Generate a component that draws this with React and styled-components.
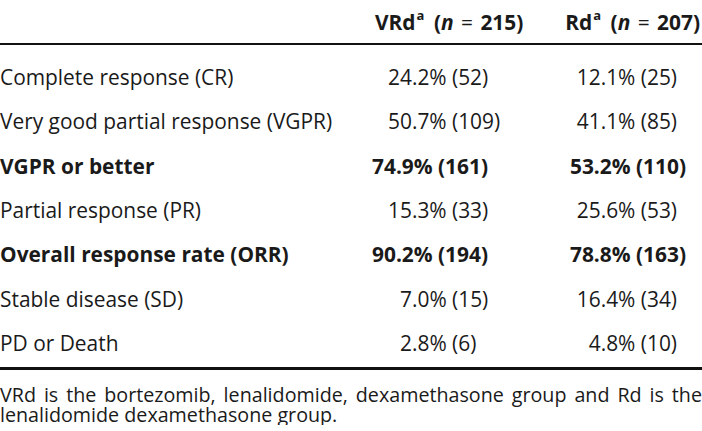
import React from "react";
import styled, { createGlobalStyle } from "styled-components";

const GlobalStyle = createGlobalStyle`
  html, body {
    margin: 0;
    padding: 0;
    background: #ffffff;
  }
  body {
    font-family: "Open Sans", "Noto Sans", sans-serif;
    color: #1a1a1a;
  }
`;

const rows = [
  { label: "Complete response (CR)", vrd: "24.2% (52)", rd: "12.1% (25)" },
  { label: "Very good partial response (VGPR)", vrd: "50.7% (109)", rd: "41.1% (85)" },
  { label: "VGPR or better", vrd: "74.9% (161)", rd: "53.2% (110)", bold: true },
  { label: "Partial response (PR)", vrd: "15.3% (33)", rd: "25.6% (53)" },
  { label: "Overall response rate (ORR)", vrd: "90.2% (194)", rd: "78.8% (163)", bold: true },
  { label: "Stable disease (SD)", vrd: "7.0% (15)", rd: "16.4% (34)", narrow: true },
  { label: "PD or Death", vrd: "2.8% (6)", rd: "4.8% (10)", narrow: true },
];

export default function App() {
  return (
    <Page>
      <GlobalStyle />
      <HeadRow>
        <span />
        <HeadCell>
          VRd<Sup>a</Sup> (<Em>n</Em> <Eq>=</Eq> 215)
        </HeadCell>
        <HeadCell $right>
          Rd<Sup>a</Sup> (<Em>n</Em> <Eq>=</Eq> 207)
        </HeadCell>
      </HeadRow>
      <Body>
        {rows.map((r) => (
          <Row key={r.label} $bold={r.bold}>
            <Label>{r.label}</Label>
            <LeftValue $bold={r.bold} $narrow={r.narrow}>
              {r.vrd}
            </LeftValue>
            <RightValue $bold={r.bold}>{r.rd}</RightValue>
          </Row>
        ))}
      </Body>
      <Note>
        VRd is the bortezomib, lenalidomide, dexamethasone group and Rd is the
        lenalidomide dexamethasone group.
      </Note>
    </Page>
  );
}

const Page = styled.div`
  width: 702px;
  font-size: 20.9px;
`;

const HeadRow = styled.div`
  display: grid;
  grid-template-columns: 360px 170px 172px;
  align-items: center;
  height: 43px;
  border-bottom: 2px solid #111;
  font-weight: 700;
`;

const HeadCell = styled.div`
  white-space: nowrap;
  padding-left: ${(p) => (p.$right ? "0" : "15px")};
  padding-right: ${(p) => (p.$right ? "2px" : "0")};
  text-align: ${(p) => (p.$right ? "right" : "left")};
`;

const Sup = styled.sup`
  font-size: 13px;
  vertical-align: 10px;
  line-height: 0;
  margin: 0 4px 0 1px;
`;

const Em = styled.i`
  font-style: italic;
`;

const Eq = styled.span`
  font-weight: 400;
  margin: 0 2px;
`;

const Body = styled.div`
  padding: 10px 0 2px;
  border-bottom: 3px solid #111;
`;

const Row = styled.div`
  display: grid;
  grid-template-columns: 360px 170px 172px;
  align-items: center;
  height: 44.33px;
  font-weight: ${(p) => (p.$bold ? 700 : 400)};
  white-space: nowrap;
`;

const Label = styled.div``;

const LeftValue = styled.div`
  padding-left: ${(p) => (p.$bold ? 12 : p.$narrow ? 40 : 28)}px;
`;

const RightValue = styled.div`
  text-align: right;
  padding-right: ${(p) => (p.$bold ? 16 : 25)}px;
`;

const Note = styled.p`
  margin: 0;
  padding-top: 15px;
  font-size: 19.7px;
  line-height: 20px;
  text-align: justify;
`;
